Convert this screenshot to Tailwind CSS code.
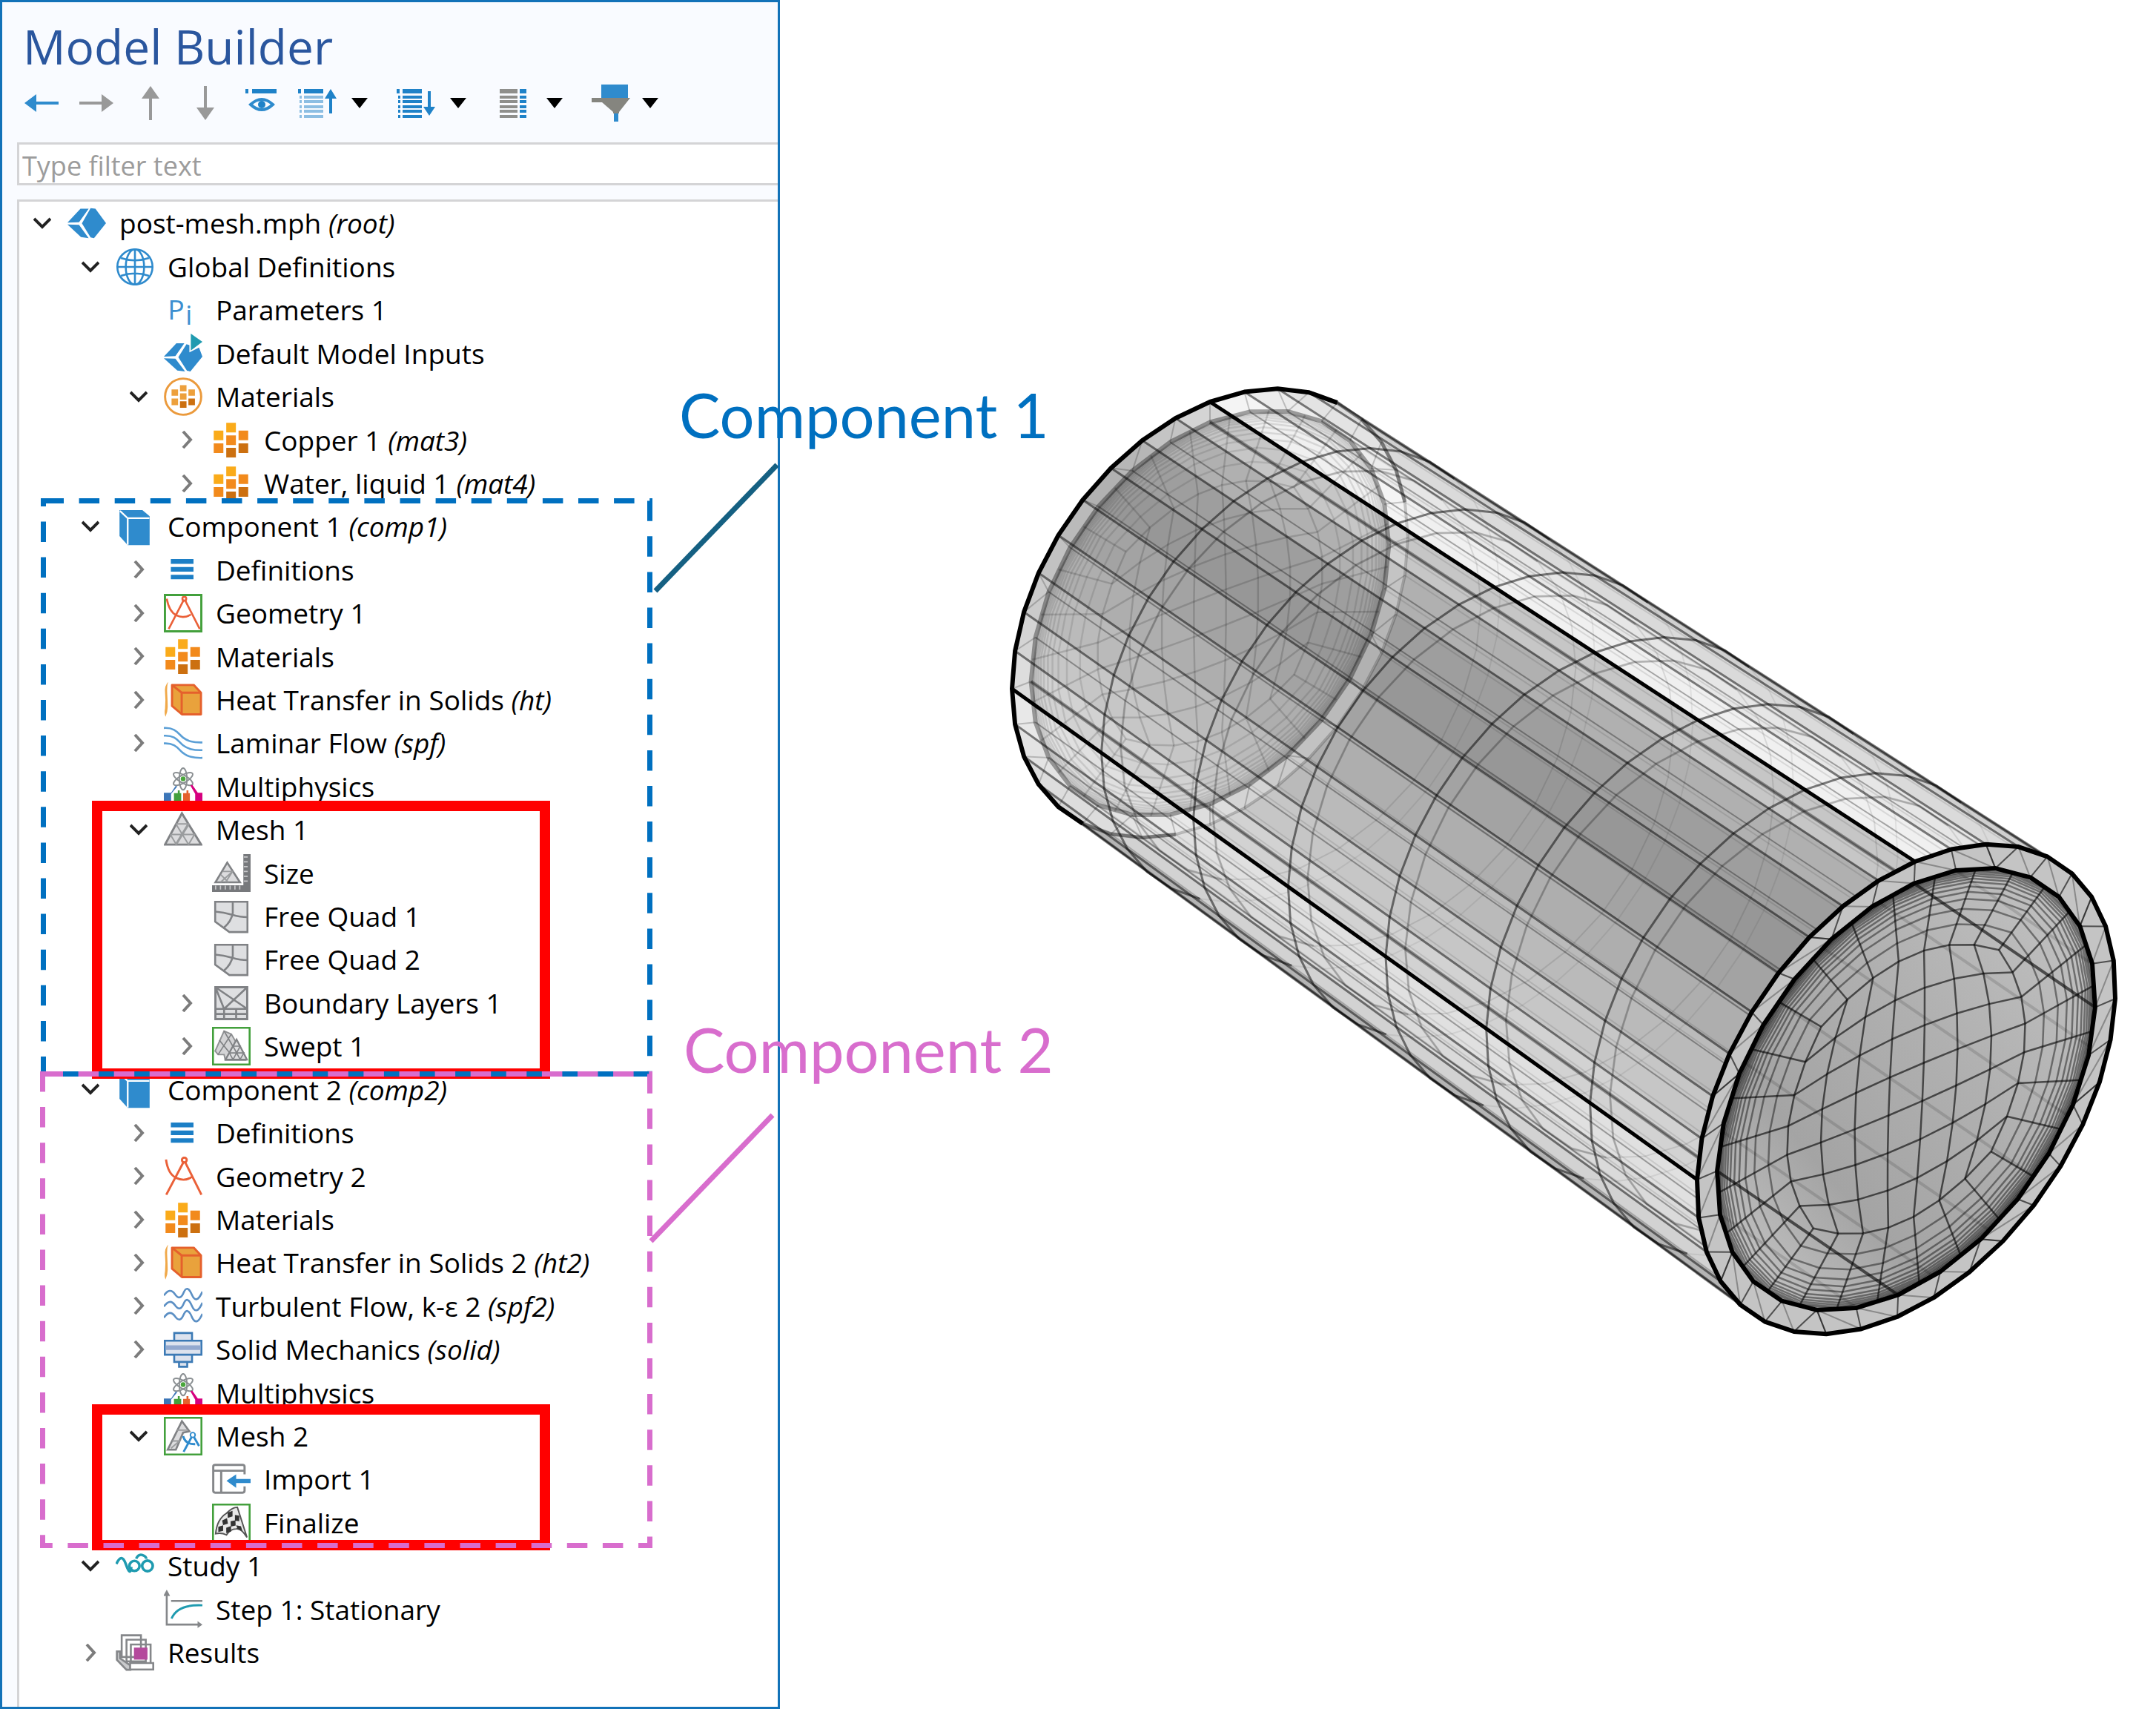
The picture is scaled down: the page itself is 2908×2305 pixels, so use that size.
<!DOCTYPE html>
<html lang="en">
<head>
    <meta charset="UTF-8">
    <meta name="viewport" content="width=device-width, initial-scale=1.0">
    <title>Model Builder</title>
    <script src="https://cdn.jsdelivr.net/npm/@tailwindcss/browser@4"></script>
</head>
<body class="bg-white flex h-screen overflow-hidden font-['Open_Sans','Noto_Sans',sans-serif] text-black">

    <!-- Icon library, 16 unit grid -->
    <svg class="hidden" aria-hidden="true">
        <symbol id="root" viewBox="0 0 16 16">
            <path fill="#2f8bcd" d="M0 7.8 5.4 2h3.4L4.8 7.6zM0 8.5l4.8.2 4 5.5-3.2-.4zM9.6 1.8l2 .2L16 8l-5 6.2-1.4-.3L6 8.1z"/>
        </symbol>
        <symbol id="globe" viewBox="0 0 16 16">
            <g fill="none" stroke="#2f8bcd" stroke-width=".8">
                <circle cx="8" cy="8" r="7.3"/><ellipse cx="8" cy="8" rx="3.8" ry="7.3"/>
                <path d="M8 .7v14.6M.7 8h14.6M2.2 4.3q5.8 2 11.6 0M2.2 11.7q5.8-2 11.6 0"/>
            </g>
        </symbol>
        <symbol id="param" viewBox="0 0 16 16">
            <text x="1.6" y="12" font-size="11.5" fill="#3b8fd0">P</text>
            <text x="9" y="14" font-size="11" fill="#3b8fd0">i</text>
        </symbol>
        <symbol id="inputs" viewBox="0 0 16 16">
            <path fill="#2f8bcd" d="M0 9.5 5.2 4h3.3L4.8 9.3zM0 10.2l4.8.2 4 5.3-3.2-.4zM9.4 4.4l1.2.4v3l4-2L16 9.5l-5 6.2-1.4-.3L6 9.8z"/>
            <path fill="#1f9bb0" d="M11.2 0 16 3.4l-4.8 3.6z"/>
        </symbol>
        <symbol id="mat" viewBox="0 0 16 16">
            <path fill="#faab1a" d="M5.9 1h4v4h-4zM.7 4.2h4v4h-4z"/>
            <path fill="#f28a1c" d="M5.9 6.2h4v4h-4zM11 4.2h4v4h-4zM.7 9.5h4v4h-4z"/>
            <path fill="#cc7010" d="M5.9 11.4h4v4h-4zM11 9.5h4v4h-4z"/>
        </symbol>
        <symbol id="matglobal" viewBox="0 0 16 16">
            <circle cx="8" cy="8" r="7.5" fill="none" stroke="#eb9a3c" stroke-width=".9"/>
            <path fill="#eda03c" d="M6.7 3.2h2.7v2.6H6.7zM3.2 5h2.7v2.6H3.2zM10.2 5h2.7v2.6h-2.7zM6.7 6.6h2.7v2.6H6.7zM3.2 8.8h2.7v2.7H3.2z"/>
            <path fill="#cc7010" d="M6.7 9.9h2.7v2.7H6.7zM10.2 8.8h2.7v2.7h-2.7z"/>
        </symbol>
        <symbol id="comp" viewBox="0 0 16 16">
            <path fill="#2f8bcd" d="M1.6 1.2h9.5l3 2.6v12H5L1.6 12z"/>
            <path fill="none" stroke="#fff" stroke-width=".7" d="M1.8 1.6 5 4.6v11M5 4.6h9"/>
        </symbol>
        <symbol id="defs" viewBox="0 0 16 16">
            <path fill="#1c7fc6" d="M2.9 3.7h9.4v2H2.9zM2.9 7h9.4v1.9H2.9zM2.9 10.2h9.4v1.9H2.9z"/>
        </symbol>
        <symbol id="geom" viewBox="0 0 16 16">
            <g fill="none" stroke="#ea6038" stroke-width=".9">
                <circle cx="8.5" cy="1.4" r="1"/><path d="M8.1 2.4 1 15.8M8.9 2.4l6.7 13.4M.9 1.2q.8 6 4.2 7.6 3.4 1.7 6.4-.3"/>
            </g>
        </symbol>
        <symbol id="geombox" viewBox="0 0 16 16">
            <g fill="none" stroke="#ea6038" stroke-width=".8">
                <circle cx="8.5" cy="2" r=".8"/><path d="M8.1 2.8 2 14.6M8.9 2.8l6 11.8M1.2 2q1 5.400 4 6.900 3 1.500 6-.3"/>
            </g>
            <path fill="none" stroke="#43a03c" stroke-width=".9" d="M.45.45h15.100v15.100H.45z"/>
        </symbol>
        <symbol id="heat" viewBox="0 0 16 16">
            <path fill="#f0a848" d="M1.800.5Q.2 2 .5 5t0 6.500q-.4 2 .2 3.500.9-2 .9-4t-.2-5.500T1.800.5z"/>
            <path fill="#e9a23c" stroke="#e5602c" stroke-width=".9" stroke-linejoin="round" d="M3.400 1.800h9l3 3.200v9H7.500L3.400 10.500z"/>
            <path fill="none" stroke="#e5602c" stroke-width=".9" d="M3.400 1.800 7.400 5h8M7.400 5v9"/>
        </symbol>
        <symbol id="laminar" viewBox="0 0 16 16">
            <path fill="none" stroke="#5b9fd6" stroke-width=".8" d="M0 1.800c5-.3 6 2.500 8 4s4 2.100 8 2M0 5c5-.3 6 2.500 8 4s4 2.100 8 2M0 8.200c5-.3 6 2.500 8 4s4 2.100 8 2"/>
        </symbol>
        <symbol id="turb" viewBox="0 0 16 16">
            <path fill="none" stroke="#5b8fc4" stroke-width=".8" d="M0 3.800Q2.500.2 4.600 3.200T8.200 2.600 11.600 3.400 16 2.200M0 8.400Q2.500 4.800 4.600 7.800T8.200 7.200 11.600 8 16 6.800M0 13Q2.500 9.400 4.600 12.400T8.200 11.800 11.600 12.600 16 11.400"/>
        </symbol>
        <symbol id="solid" viewBox="0 0 16 16">
            <g fill="#dde3ee" stroke="#3c7ab5" stroke-width=".8">
                <path d="M4.300 1.200h7.400v3.400H4.300zM4.300 10h7.400v3.200H4.300zM6.300 13.200h3.400v2H6.300z"/>
                <path d="M.4 4.400h15.200v5.800H.4z"/>
            </g>
            <path fill="#93a9cf" d="M.8 6.300h14.400v1.900H.8z"/>
        </symbol>
        <symbol id="multi" viewBox="0 0 16 16">
            <g fill="none" stroke="#8a8f92" stroke-width=".6">
                <ellipse cx="8" cy="4.800" rx="1.600" ry="4.500"/>
                <ellipse cx="8" cy="4.800" rx="1.600" ry="4.500" transform="rotate(60 8 4.800)"/>
                <ellipse cx="8" cy="4.800" rx="1.600" ry="4.500" transform="rotate(120 8 4.800)"/>
            </g>
            <circle cx="8" cy="4.800" r="1" fill="#4aa63c"/>
            <path fill="#3c76b8" d="m5 7.500-2 3H0V14h3v-3l2.500-3z"/><path fill="#43a03c" d="M5.800 9.500h.8v1.200h.6V14H4.200v-3.300h1.600z"/>
            <path fill="#e5602c" d="M9.400 9.500h.8v1.200h.6V14H8v-3.300h1.400z"/><path fill="#d6007f" d="m11 7.500.8-.3 2.300 3.300H16V14h-3v-3z"/>
        </symbol>
        <symbol id="mesh" viewBox="0 0 16 16">
            <path fill="#dcdcde" stroke="#808285" stroke-width=".9" d="M7.500 1.200 15.500 14.200H.500z"/>
            <path fill="none" stroke="#9a9c9e" stroke-width=".6" d="M5 5.600h5l-5.200 8.600M10 5.600l.4.200-5.200 8.400M5 5.600 10.300 14.200M2.700 10h10l-2.500 4.200M2.700 10l2.500 4.200"/>
        </symbol>
        <symbol id="size" viewBox="0 0 16 16">
            <path fill="#dcdcde" stroke="#808285" stroke-width=".8" d="M6.300 3.800 11.600 12H1.400z"/>
            <path fill="none" stroke="#9a9c9e" stroke-width=".6" d="M4.500 7.500h4L5.600 12M8.500 7.500 3.500 12M3.600 8.800 6.800 12"/>
            <path fill="#77797c" d="M0 13.200h16V16H0zM13 .3h3V16h-3z"/>
            <path fill="none" stroke="#c8c8ca" stroke-width=".5" d="M1.500 13.400v1.600M3.500 13.400v1.600M5.500 13.400v1.600M7.500 13.400v1.600M9.500 13.400v1.600M11.500 13.400v1.600M13.200 11.500h1.600M13.200 9.500h1.600M13.200 7.500h1.600M13.200 5.500h1.600M13.200 3.500h1.600M13.200 1.500h1.600"/>
        </symbol>
        <symbol id="quad" viewBox="0 0 16 16">
            <path fill="#dedfe1" stroke="#808285" stroke-width=".8" d="M1.300 1.900h13.400v12.600H7.200L1.300 10.200z"/>
            <path fill="none" stroke="#808285" stroke-width=".8" d="M8.600 1.900v4.700Q8 10 5 12.600M1.300 6q3.500.3 7 1.300t6.400 1"/>
        </symbol>
        <symbol id="layers" viewBox="0 0 16 16">
            <path fill="#dedfe1" stroke="#808285" stroke-width=".9" d="M1.400 1.400h13.200v13.200H1.400z"/>
            <path fill="none" stroke="#808285" stroke-width=".8" d="M1.400 1.400 5 10.400M1.400 1.400l13.200 9M14.600 1.400 5 10.400h9.600M1.400 10.400H5M1.400 12.500h13.200M5 10.400v4.200M10 10.400v4.200"/>
        </symbol>
        <symbol id="swept" viewBox="0 0 16 16">
            <path fill="#d4d4d6" stroke="#909294" stroke-width=".6" d="M5 1.700 8 3l5 8.600.9 2.200H5.500L5 11.500H2.500L1.300 10z"/>
            <path fill="#dedee0" stroke="#808285" stroke-width=".7" d="M10.200 5.200 14.500 13.600H5.600z"/>
            <path fill="none" stroke="#808285" stroke-width=".5" d="M3 5.500 7.500 11M5 1.700 8.600 8M8 3 2.500 11.500M8.700 8h3l-3 5.600M7.200 10.800h6l-1.600 2.800M7.200 10.800l1.500 2.800M8.700 8l3 5.600"/>
            <path fill="none" stroke="#43a03c" stroke-width=".8" d="M.4.4h15.200v15.200H.4z"/>
        </symbol>
        <symbol id="meshimp" viewBox="0 0 16 16">
            <path fill="#dcdcde" stroke="#808285" stroke-width=".8" d="M7.500 1.800 10.600 6 8 6.500 5 13.600H1.600z"/>
            <path fill="none" stroke="#9a9c9e" stroke-width=".6" d="M5.500 5.500h4.500M3.500 10h3L3 13"/>
            <path fill="none" stroke="#2f8bcd" stroke-width=".9" d="M8 8q1 3.500 5 3.300M8.200 14.500l3.800-7M12 7.500l2.600 4.600"/><circle cx="12" cy="7.500" r="1" fill="#fff" stroke="#2f8bcd" stroke-width=".6"/>
            <path fill="none" stroke="#43a03c" stroke-width=".8" d="M.4.4h15.200v15.200H.4z"/>
        </symbol>
        <symbol id="import" viewBox="0 0 16 16">
            <path fill="none" stroke="#85878a" stroke-width=".9" d="M13.500 6V2.800q0-.7-.8-.7H1.300q-.8 0-.8.7v10q0 .8.800.8h11.400q.8 0 .8-.8V11M.5 4.500h13M3.800 4.500v9"/>
            <path fill="#2f8bcd" d="M6 8.700 10 6v1.900h6v1.700h-6v2z"/>
        </symbol>
        <symbol id="finalize" viewBox="0 0 16 16">
            <path fill="#e8e8e8" stroke="#555" stroke-width=".6" d="M1.500 12.500Q2 6.500 6 4q2.500-2.500 4.500-2.500L14.500 14q-2.500-4-4.500-3.500-2.500 0-4 2.500-2-1-4.500-.5z"/>
            <path fill="#333" d="M6.500 3.700 8.500 3v2.300l-2 .6zM9.500 4.700l1.800.3v2.300l-1.800-.2zM4.200 7l2 -1 .4 2.300-2 .6zM7.700 7.300l2-.4.100 2.200-2 .4zM2.600 9.600l2-.6v2.300l-2 .5zM5.900 10l2-.7v2.300l-2 .6zM10 9l2 .4.600 2-2-.9z"/>
            <path fill="none" stroke="#43a03c" stroke-width=".8" d="M.4.4h15.200v15.200H.4z"/>
        </symbol>
        <symbol id="study" viewBox="0 0 16 16">
            <g fill="none" stroke="#1f9bb0" stroke-width="1.100">
                <path d="M.3 7.200q2.200-5 4 .2t2.200 1M8.500 5q1-2 2.600-1.500t1.600 1.600"/><circle cx="7.800" cy="8" r="2.100"/><circle cx="13.200" cy="8" r="2.200"/>
            </g>
        </symbol>
        <symbol id="step" viewBox="0 0 16 16">
            <path fill="none" stroke="#85878a" stroke-width=".8" d="M1.200 1.500v13h14M3 4.700h13"/>
            <path fill="#85878a" d="M1.200 0 2.600 2.600H-.2zM16 14.500l-2 1.400v-2.800z"/>
            <path fill="none" stroke="#1f9bb0" stroke-width=".9" d="M3.200 12q2.500-6 12.800-5.500"/>
        </symbol>
        <symbol id="results" viewBox="0 0 16 16">
            <g fill="#fff" stroke="#85878a" stroke-width=".8">
                <path d="M2.500.8h8v9h-8zM4.500 2.600h8v9h-8zM6.300 4.600h8.200v8H6.300z"/>
                <path fill="#c9cacc" d="M.5 7.500h1.300v2.800l4.300 3v1.800H4.500L.5 11z"/><path d="M6 12.300h9.600V15H6z"/>
            </g>
            <path fill="#b44a9c" d="M7.600 5.900h5.600v5H7.600z"/>
        </symbol>
        <symbol id="caret" viewBox="0 0 22 14"><path d="M0 0h22L11 14z"/></symbol>
    </svg>

    <!-- Model Builder panel -->
    <aside class="relative w-[1052px] shrink-0 h-full flex flex-col bg-[#f9fbff] border-3 border-[#1272b8]">
        <h1 class="pl-7 pt-4 text-[64px] leading-[88px] text-[#2a569e]">Model Builder</h1>

        <div class="flex items-center h-[64px] pl-[30px]">
            <button aria-label="Back" class="w-[46px]">
                <svg class="w-[46px] h-6" viewBox="0 0 46 24" fill="#2f8bcd"><path d="M0 12 16 0v10h30v4H16v10z"/></svg>
            </button>
            <button aria-label="Forward" class="w-[46px] ml-7">
                <svg class="w-[46px] h-6" viewBox="0 0 46 24" fill="#999"><path d="M46 12 30 0v10H0v4h30v10z"/></svg>
            </button>
            <button aria-label="Move up" class="ml-[38px]">
                <svg class="w-6 h-[46px]" viewBox="0 0 24 46" fill="#999"><path d="M12 0l12 17H14v29h-4V17H0z"/></svg>
            </button>
            <button aria-label="Move down" class="ml-[50px]">
                <svg class="w-6 h-[46px]" viewBox="0 0 24 46" fill="#999"><path d="M12 46l12-17H14V0h-4v29H0z"/></svg>
            </button>
            <button aria-label="Show" class="ml-[42px]">
                <svg class="w-[42px] h-[46px]" viewBox="0 0 42 46" fill="#1f82c8">
                    <path d="M0 4h4v6H0zM9 4h33v6H9z"/>
                    <path fill="none" stroke="#2f8bcd" stroke-width="4" d="M7 25q15-14 30 0-15 14-30 0z"/><circle cx="22" cy="25" r="5"/>
                </svg>
            </button>
            <button aria-label="Collapse all" class="ml-[29px] flex items-center gap-5">
                <svg class="w-[52px] h-[46px]" viewBox="0 0 52 46" fill="#1f82c8">
                    <path d="M0 4h4v6H0zM8 4h26v6H8z"/>
                    <path opacity=".5" d="M2 13h3v4H2zM8 13h26v4H8zM2 19h3v4H2zM8 19h26v4H8zM2 26h3v4H2zM8 26h26v4H8zM2 32h3v4H2zM8 32h26v4H8zM2 39h3v4H2zM8 39h26v4H8z"/>
                    <path d="M44 4l8 13h-6v20h-4V17h-6z"/>
                </svg>
                <svg class="w-[22px] h-[14px]"><use href="#caret"/></svg>
            </button>
            <button aria-label="Expand all" class="ml-[39px] flex items-center gap-5">
                <svg class="w-[52px] h-[46px]" viewBox="0 0 52 46" fill="#1f82c8">
                    <path d="M0 4h4v6H0zM8 4h26v6H8z"/>
                    <path d="M2 13h3v4H2zM8 13h26v4H8zM2 19h3v4H2zM8 19h26v4H8zM2 26h3v4H2zM8 26h26v4H8zM2 32h3v4H2zM8 32h26v4H8zM2 39h3v4H2zM8 39h26v4H8z"/>
                    <path d="M44 40l8-12h-6V7h-4v21h-6z"/>
                </svg>
                <svg class="w-[22px] h-[14px]"><use href="#caret"/></svg>
            </button>
            <button aria-label="Node text" class="ml-[45px] flex items-center gap-[27px]">
                <svg class="w-9 h-[46px]" viewBox="0 0 36 46">
                    <path fill="#8f8f8c" d="M0 4h24v6H0zM0 13h24v4H0zM0 19h24v4H0zM0 26h24v4H0zM0 32h24v4H0zM0 39h24v4H0z"/>
                    <path fill="#1f82c8" d="M27 4h9v6h-9zM27 13h9v4h-9zM27 19h9v4h-9zM27 26h9v4h-9zM27 32h9v4h-9zM27 39h9v4h-9z"/>
                </svg>
                <svg class="w-[22px] h-[14px]"><use href="#caret"/></svg>
            </button>
            <button aria-label="Filter" class="ml-[39px] flex items-center gap-4">
                <svg class="w-[52px] h-[50px]" viewBox="0 0 52 50">
                    <path fill="#2f8bcd" d="M13 0h36v18H13zM30 38h6v12h-6z"/>
                    <path fill="#85857f" d="M0 18h52L37 37v2h-8v-2L14 24H0z"/>
                </svg>
                <svg class="w-[22px] h-[14px]"><use href="#caret"/></svg>
            </button>
        </div>

        <input type="text" aria-label="Filter" placeholder="Type filter text"
            class="ml-5 mt-[21px] h-[58px] pl-1 pt-1 bg-white border-3 border-r-0 border-[#d4d4d6] text-4xl placeholder:text-[#9c9c9c]">

        <ul id="tree" class="flex-1 ml-5 mt-[19px] pb-[44px] grid auto-rows-fr bg-white border-t-3 border-l-3 border-[#d4d4d6] text-[37px] whitespace-nowrap"></ul>

        <!-- Mesh highlights -->
        <div class="absolute left-[121px] top-[1077px] w-[618px] h-[375px] border-14 border-[#ff0000]"></div>
        <div class="absolute left-[121px] top-[1891px] w-[618px] h-[197px] border-14 border-[#ff0000]"></div>

        <!-- Component outlines and leader lines -->
        <svg class="absolute -left-[3px] -top-[3px] w-[1100px] h-[2305px]" viewBox="0 0 1100 2305" fill="none" stroke-width="7" aria-hidden="true">
            <g stroke-dasharray="27.500 20.600">
                <path stroke="#0070c0" d="M58.500 675.500h818v773h-818z"/>
                <path stroke="#d86dcd" d="M57.500 1448.500h819v636h-819z"/>
            </g>
            <path stroke="#156082" d="M884 797 1048 627"/>
            <path stroke="#d86dcd" d="M878 1674 1042 1504"/>
        </svg>
        <p class="absolute left-[913px] top-[506px] font-[Lato,sans-serif] text-[83px] leading-[100px] whitespace-nowrap text-[#0070c0]">Component 1</p>
        <p class="absolute left-[919px] top-[1362px] font-[Lato,sans-serif] text-[83px] leading-[100px] whitespace-nowrap text-[#d86dcd]">Component 2</p>
    </aside>

    <main class="flex-1 flex items-center justify-end pr-7">
        <svg id="pipe" class="w-[1540px] shrink-0" viewBox="1340 492 1540 1321" role="img" aria-label="Meshed pipe"></svg>
    </main>

    <script>
        // [level, state, icon, label, tag]
        const nodes = [
            [0, 'open', 'root', 'post-mesh.mph', 'root'],
            [1, 'open', 'globe', 'Global Definitions'],
            [2, '', 'param', 'Parameters 1'],
            [2, '', 'inputs', 'Default Model Inputs'],
            [2, 'open', 'matglobal', 'Materials'],
            [3, 'closed', 'mat', 'Copper 1', 'mat3'],
            [3, 'closed', 'mat', 'Water, liquid 1', 'mat4'],
            [1, 'open', 'comp', 'Component 1', 'comp1'],
            [2, 'closed', 'defs', 'Definitions'],
            [2, 'closed', 'geombox', 'Geometry 1'],
            [2, 'closed', 'mat', 'Materials'],
            [2, 'closed', 'heat', 'Heat Transfer in Solids', 'ht'],
            [2, 'closed', 'laminar', 'Laminar Flow', 'spf'],
            [2, '', 'multi', 'Multiphysics'],
            [2, 'open', 'mesh', 'Mesh 1'],
            [3, '', 'size', 'Size'],
            [3, '', 'quad', 'Free Quad 1'],
            [3, '', 'quad', 'Free Quad 2'],
            [3, 'closed', 'layers', 'Boundary Layers 1'],
            [3, 'closed', 'swept', 'Swept 1'],
            [1, 'open', 'comp', 'Component 2', 'comp2'],
            [2, 'closed', 'defs', 'Definitions'],
            [2, 'closed', 'geom', 'Geometry 2'],
            [2, 'closed', 'mat', 'Materials'],
            [2, 'closed', 'heat', 'Heat Transfer in Solids 2', 'ht2'],
            [2, 'closed', 'turb', 'Turbulent Flow, k-ε 2', 'spf2'],
            [2, 'closed', 'solid', 'Solid Mechanics', 'solid'],
            [2, '', 'multi', 'Multiphysics'],
            [2, 'open', 'meshimp', 'Mesh 2'],
            [3, '', 'import', 'Import 1'],
            [3, '', 'finalize', 'Finalize'],
            [1, 'open', 'study', 'Study 1'],
            [2, '', 'step', 'Step 1: Stationary'],
            [1, 'closed', 'results', 'Results'],
        ];
        const chevrons = {
            open: '<svg class="w-6 h-4" viewBox="0 0 24 16" fill="none" stroke="#222" stroke-width="4"><path d="M1 2l11 11L23 2"/></svg>',
            closed: '<svg class="w-4 h-6" viewBox="0 0 16 24" fill="none" stroke="#7c7c7c" stroke-width="4"><path d="M3 1l10 11L3 23"/></svg>',
            '': '',
        };
        document.getElementById('tree').innerHTML = nodes.map(([level, state, icon, label, tag]) => `
            <li class="flex items-center" style="padding-left:${level * 65 + 11}px">
                <span class="w-10 flex justify-center shrink-0">${chevrons[state]}</span>
                <svg class="w-[52px] h-[52px] ml-[14px] mr-[18px] shrink-0"><use href="#${icon}"/></svg>
                <span>${label}${tag ? ` <i>(${tag})</i>` : ''}</span>
            </li>`).join('');

        // Pipe: t runs along the axis, 0 = far end, 1 = near end.
        // Each end has its centre, the two half axes of its circle and a depth.
        const far = { c: [1632, 827], a: [267, -102], b: [0, -285], w: 1 / 0.9 };
        const near = { c: [2571, 1469], a: [282, -122], b: [12, -307], w: 1 };
        const INNER = 0.904, N = 36, M = 28, RINGS = 7;
        const out = [];

        function project(a, b, t) {
            const f = far.w * (1 - t), n = near.w * t;
            return [0, 1].map(k => ((f * (far.c[k] + a * far.a[k] + b * far.b[k])
                + n * (near.c[k] + a * near.a[k] + b * near.b[k])) / (f + n)).toFixed(1));
        }
        function polar(deg, r, t) {
            const q = deg * Math.PI / 180;
            return project(r * Math.cos(q), r * Math.sin(q), t);
        }
        function line(points, width, opacity, close) {
            out.push(`<path d="M${points.join('L')}${close ? 'z' : ''}" fill="none" stroke="#000" stroke-width="${width}" stroke-opacity="${opacity}" stroke-linejoin="round"/>`);
        }
        function fill(points, color, opacity = 1) {
            out.push(`<path d="M${points.join('L')}z" fill="${color}" fill-opacity="${opacity}" stroke="${color}" stroke-opacity="${opacity}" stroke-width="1"/>`);
        }
        function circle(r, t, n) {
            return Array.from({ length: n }, (_, i) => polar(i * 360 / n, r, t));
        }
        function arc(from, to, r, t, n) {
            const pts = [];
            for (let d = from; d <= to + 0.01; d += 360 / n) pts.push(polar(d, r, t));
            return pts;
        }

        // Quad core with boundary layers towards the wall
        function capMesh(t, opacity, width) {
            const core = (x, y) => [x * (0.47 + 0.16 * (1 - y * y)) * INNER, y * (0.49 + 0.16 * (1 - x * x)) * INNER];
            const k = Array.from({ length: 8 }, (_, i) => -1 + i * 2 / 7);
            for (const c of k) {
                line(k.map(s => project(...core(c, s), t)), width, opacity);
                line(k.map(s => project(...core(s, c), t)), width, opacity);
            }
            const rim = [];
            for (let i = 0; i < 7; i++) rim.push([1, k[i]]);
            for (let i = 7; i > 0; i--) rim.push([k[i], 1]);
            for (let i = 7; i > 0; i--) rim.push([-1, k[i]]);
            for (let i = 0; i < 7; i++) rim.push([k[i], -1]);
            const spoke = (i, s) => {
                const [a, b] = core(...rim[i]);
                const q = (i * 360 / M - 45) * Math.PI / 180;
                return project(a + (Math.cos(q) * INNER - a) * s, b + (Math.sin(q) * INNER - b) * s, t);
            };
            for (let i = 0; i < M; i++) line([spoke(i, 0), spoke(i, 1)], width, opacity);
            for (const s of [0.27, 0.47, 0.6, 0.69, 0.76, 0.82, 0.865, 0.9, 0.93, 0.955, 0.975])
                line(rim.map((_, i) => spoke(i, s)), width, opacity * 0.7, true);
        }

        // Outer wall, one shade per 10 degree strip
        const shades = {
            25: '#b4b4b4', 35: '#bcbcbc', 45: '#c8c8c8', 55: '#d0d0d0', 65: '#dadada', 75: '#e6e6e6', 85: '#f0f0f0',
            95: '#c6c6c6', 105: '#b0b0b0', 115: '#9e9e9e', 125: '#979797', 135: '#a3a3a3', 145: '#aeaeae', 155: '#bababa',
            165: '#c6c6c6', 175: '#d2d2d2', 185: '#e0e0e0', 195: '#dadada', 205: '#d2d2d2', 215: '#c8c8c8', 225: '#bebebe', 235: '#b4b4b4',
        };
        fill(circle(1, 0, N), '#cccccc');
        for (const [mid, color] of Object.entries(shades)) {
            const a = +mid - 5, b = +mid + 5;
            fill([polar(a, 1, 0), polar(b, 1, 0), polar(b, 1, 1), polar(a, 1, 1)], color);
        }

        // Far end seen through the wall
        fill([...circle(1, 0, N), polar(0, 1, 0), polar(0, INNER, 0), ...circle(INNER, 0, M).reverse()], '#ffffff', 0.25);
        capMesh(0, 0.15, 2.500);
        line(circle(INNER, 0, M), 6, 0.35, true);
        line(circle(1, 0, N), 4, 0.2, true);
        for (let i = 0; i < N; i++) line([polar(i * 10, 1, 0), polar(Math.round(i * M / N) * 360 / M, INNER, 0)], 2, 0.2);

        // Lines along the axis
        for (let i = 0; i < N; i++) {
            const d = i * 10, seen = d >= 40 && d <= 230;
            line([polar(d, 1, 0), polar(d, 1, 1)], seen ? 3 : 2, seen ? 0.5 : 0.1);
        }
        for (let i = 0; i < M; i++) {
            const d = i * 360 / M, seen = d >= 40 && d <= 230;
            line([polar(d, INNER, 0), polar(d, INNER, 1)], 2, seen ? 0.32 : 0.1);
        }
        for (const d of [90, 180]) line([polar(d, INNER, 0), polar(d, INNER, 1)], 5, 0.35);

        // Rings
        for (let i = 1; i < RINGS; i++) {
            line(arc(40, 240, 1, i / RINGS, N), 3, 0.5);
            line(arc(240, 400, 1, i / RINGS, N), 2, 0.07);
            line(circle(INNER, i / RINGS, M), 2, 0.1, true);
            line(arc(360 / M * 3, 360 / M * 19, INNER, i / RINGS, M), 3, 0.18);
        }
        line(arc(10, 60, 1, 0, N), 5, 0.35);
        line(arc(230, 260, 1, 0, N), 5, 0.35);
        line(arc(50, 230, 1, 0, N), 6, 1);
        for (const d of [90, 180]) line([polar(d, 1, 0), polar(d, 1, 1)], 5, 1);

        // Near end
        fill(circle(1, 1, N), '#c4c4c4');
        for (let i = 0; i < N; i++) {
            const j = Math.round(i * M / N) * 360 / M;
            line([polar(i * 10, 1, 1), polar(j, INNER, 1)], 2, 0.6);
            line([polar(i * 10 + 10, 1, 1), polar(j, INNER, 1)], 2, 0.3);
        }
        out.push('<defs><linearGradient id="cap" x1="1" y1="0" x2="0" y2="1"><stop offset="0" stop-color="#c4c4c4"/><stop offset=".4" stop-color="#b0b0b0"/><stop offset=".7" stop-color="#a4a4a4"/><stop offset="1" stop-color="#cccccc"/></linearGradient></defs>');
        fill(circle(INNER, 1, M), 'url(#cap)');
        for (let i = -3; i <= 3; i++) {
            const a = i * 0.18, s = Math.sqrt((0.8 - 2 * a * a) / 2);
            line([project(a - s, a + s, 1), project(a + s, a - s, 1)], 4, 0.13);
        }
        capMesh(1, 0.6, 2.500);
        line([polar(90, INNER, 1), polar(0, INNER, 1)], 4, 0.6);
        line([polar(180, INNER, 1), polar(270, INNER, 1)], 4, 0.6);
        line(circle(INNER, 1, M), 6, 1, true);
        line(circle(1, 1, N), 6, 1, true);

        document.getElementById('pipe').innerHTML = out.join('');
    </script>
</body>
</html>
